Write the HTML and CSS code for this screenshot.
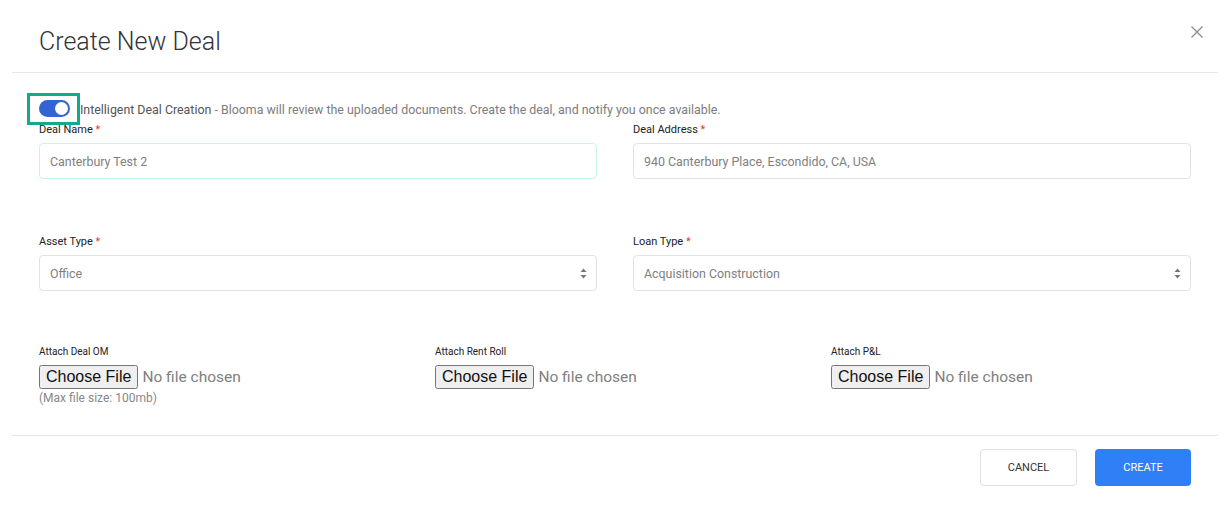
FILE: index.html
```html
<!DOCTYPE html>
<html lang="en">
<head>
    <meta charset="UTF-8">
    <meta name="viewport" content="width=device-width, initial-scale=1.0">
    <title>Create New Deal</title>
    <link rel="stylesheet" href="styles.css">
</head>
<body>
    <div class="modal">
        <div class="modal-header">
            <h1 class="modal-title">Create New Deal</h1>
            <button class="close-button" aria-label="Close">
                <svg width="12" height="12" viewBox="0 0 12 12">
                    <path d="M0.5 0.5 L11.5 11.5 M11.5 0.5 L0.5 11.5" stroke="#8a8a8a" stroke-width="1.2" fill="none"/>
                </svg>
            </button>
        </div>

        <div class="modal-body">
            <div class="toggle-row">
                <div class="highlight">
                    <label class="switch">
                        <input type="checkbox" checked>
                        <span class="slider"></span>
                    </label>
                </div>
                <span class="toggle-text"><b>Intelligent Deal Creation</b> - Blooma will review the uploaded documents. Create the deal, and notify you once available.</span>
            </div>

            <div class="form-row two">
                <div class="form-group">
                    <label class="field-label">Deal Name <span class="req">*</span></label>
                    <input type="text" class="text-input focused" value="Canterbury Test 2">
                </div>
                <div class="form-group">
                    <label class="field-label">Deal Address <span class="req">*</span></label>
                    <input type="text" class="text-input" value="940 Canterbury Place, Escondido, CA, USA">
                </div>
            </div>

            <div class="form-row two">
                <div class="form-group">
                    <label class="field-label">Asset Type <span class="req">*</span></label>
                    <div class="select-box">
                        <span>Office</span>
                        <svg width="7" height="11" viewBox="0 0 7 11">
                            <path d="M3.5 0.5 L6.5 4 L0.5 4 Z M0.5 7 L6.5 7 L3.5 10.5 Z" fill="#777"/>
                        </svg>
                    </div>
                </div>
                <div class="form-group">
                    <label class="field-label">Loan Type <span class="req">*</span></label>
                    <div class="select-box">
                        <span>Acquisition Construction</span>
                        <svg width="7" height="11" viewBox="0 0 7 11">
                            <path d="M3.5 0.5 L6.5 4 L0.5 4 Z M0.5 7 L6.5 7 L3.5 10.5 Z" fill="#777"/>
                        </svg>
                    </div>
                </div>
            </div>

            <div class="form-row three">
                <div class="form-group">
                    <label class="file-label">Attach Deal OM</label>
                    <input type="file" class="file-input">
                    <div class="hint">(Max file size: 100mb)</div>
                </div>
                <div class="form-group">
                    <label class="file-label">Attach Rent Roll</label>
                    <input type="file" class="file-input">
                </div>
                <div class="form-group">
                    <label class="file-label">Attach P&amp;L</label>
                    <input type="file" class="file-input">
                </div>
            </div>
        </div>

        <div class="modal-footer">
            <button class="btn btn-cancel">Cancel</button>
            <button class="btn btn-create">Create</button>
        </div>
    </div>
</body>
</html>
```

FILE: styles.css
```css
body {
    margin: 0;
    background-color: #fff;
    font-family: Roboto, "Liberation Sans", Arial, sans-serif;
    color: #333;
}

.modal {
    width: 1230px;
    height: 512px;
    background-color: #fff;
}

.modal-header {
    margin: 0 12px;
    height: 73px;
    box-sizing: border-box;
    padding: 0 15px 0 27px;
    border-bottom: 1px solid #e6e6e6;
    display: flex;
    justify-content: space-between;
    align-items: flex-start;
}

.modal-title {
    margin: 27px 0 0;
    font-size: 25px;
    line-height: 30px;
    font-weight: 300;
    color: #333;
}

.close-button {
    margin-top: 26px;
    padding: 0;
    border: none;
    background: none;
    cursor: pointer;
    line-height: 0;
}

.modal-body {
    padding: 20px 39px 0;
    height: 362px;
    box-sizing: border-box;
}

/* переключатель */
.toggle-row {
    display: flex;
    align-items: center;
    margin-bottom: -2px;
}

.highlight {
    margin-left: -12px;
    border: 3px solid #14a98b;
    padding: 4px 7px 5px 9px;
    line-height: 0;
}

.switch {
    position: relative;
    display: inline-block;
    width: 31px;
    height: 17px;
}

.switch input {
    opacity: 0;
    width: 0;
    height: 0;
}

.slider {
    position: absolute;
    inset: 0;
    background-color: #3264d4;
    border-radius: 9px;
}

.slider::before {
    content: "";
    position: absolute;
    width: 13px;
    height: 13px;
    right: 2px;
    top: 2px;
    background-color: #fff;
    border-radius: 50%;
}

.toggle-text {
    font-size: 12.4px;
    color: #7d7d7d;
}

.toggle-text b {
    font-weight: 400;
    color: #555;
}

.form-row {
    display: grid;
    column-gap: 36px;
}

.form-row.two {
    grid-template-columns: 1fr 1fr;
    margin-bottom: 56px;
}

.form-row.three {
    grid-template-columns: 1fr 1fr 1fr;
    margin-top: -2px;
}

.field-label {
    display: block;
    font-size: 11px;
    line-height: 14px;
    margin-bottom: 6px;
    color: #222;
}

.req {
    color: #e53935;
}

.text-input {
    display: block;
    width: 100%;
    height: 36px;
    box-sizing: border-box;
    padding: 0 10px;
    border: 1px solid #e2e2e2;
    border-radius: 4px;
    font-family: inherit;
    font-size: 12.4px;
    color: #808080;
    outline: none;
}

.text-input.focused {
    border-color: #c9f4ec;
}

.select-box {
    height: 36px;
    box-sizing: border-box;
    padding: 0 9px 0 10px;
    border: 1px solid #e2e2e2;
    border-radius: 4px;
    display: flex;
    align-items: center;
    justify-content: space-between;
    font-size: 12.4px;
    color: #808080;
}

.file-label {
    display: block;
    font-size: 10px;
    line-height: 14px;
    margin-bottom: 6px;
    color: #222;
}

.file-input {
    display: block;
    font-family: Roboto, "Liberation Sans", Arial, sans-serif;
    font-size: 15.5px;
    color: #808080;
}

.file-input::file-selector-button {
    font-family: "Liberation Sans", Arial, sans-serif;
    font-size: 16px;
    color: #111;
    margin-right: 4px;
    padding: 1px 5px;
}

.hint {
    margin-top: 2px;
    font-size: 12px;
    color: #888;
}

.modal-footer {
    margin: 0 12px;
    border-top: 1px solid #e6e6e6;
    padding: 13px 27px 0;
    display: flex;
    justify-content: flex-end;
    gap: 18px;
}

.btn {
    height: 37px;
    border-radius: 4px;
    font-family: inherit;
    font-size: 11px;
    text-transform: uppercase;
    cursor: pointer;
}

.btn-cancel {
    width: 97px;
    background-color: #fff;
    border: 1px solid #e0e0e0;
    color: #333;
}

.btn-create {
    width: 96px;
    background-color: #2f80f7;
    border: none;
    color: #fff;
}
```
